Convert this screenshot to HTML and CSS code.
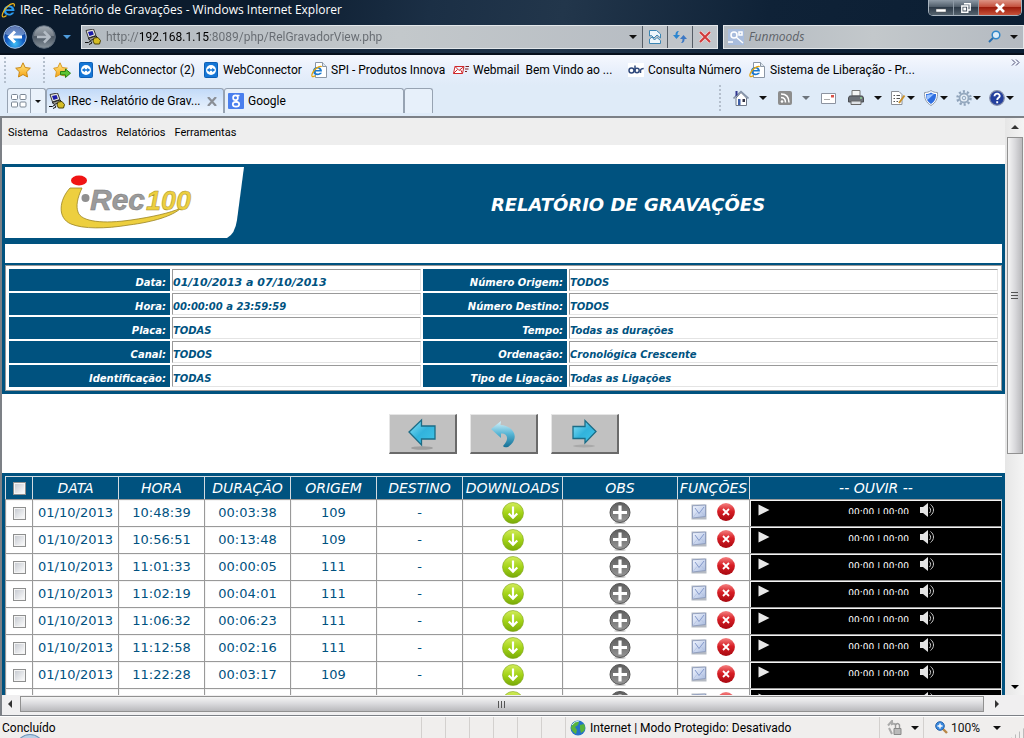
FILE: index.html
```html
<!DOCTYPE html>
<html lang="pt-BR">
<head>
<meta charset="utf-8">
<title>IRec - Relatório de Gravações</title>
<link rel="stylesheet" href="styles.css">
</head>
<body>
<svg class="defs" aria-hidden="true">
  <defs>
    <radialGradient id="gBlue" cx="50%" cy="80%" r="75%"><stop offset="0" stop-color="#3fc0f5"/><stop offset=".5" stop-color="#1560c4"/><stop offset="1" stop-color="#0a2f86"/></radialGradient>
    <linearGradient id="gGray" x2="0" y2="1"><stop offset="0" stop-color="#8d97a2"/><stop offset=".5" stop-color="#4d5864"/><stop offset="1" stop-color="#8a959e"/></linearGradient>
    <linearGradient id="gGreen" x2="0" y2="1"><stop offset="0" stop-color="#d2ec5a"/><stop offset=".5" stop-color="#a3d317"/><stop offset="1" stop-color="#78aa08"/></linearGradient>
    <linearGradient id="gPlus" x2="0" y2="1"><stop offset="0" stop-color="#5e5e5e"/><stop offset="1" stop-color="#959595"/></linearGradient>
    <linearGradient id="gRed" x2="0" y2="1"><stop offset="0" stop-color="#f48080"/><stop offset=".45" stop-color="#d81f26"/><stop offset="1" stop-color="#a80810"/></linearGradient>
    <linearGradient id="gMail" x2="1" y2="1"><stop offset="0" stop-color="#f2f6ff"/><stop offset="1" stop-color="#a9bbdf"/></linearGradient>
    <linearGradient id="gArrow" x2="1" y2="1"><stop offset="0" stop-color="#8fe4f8"/><stop offset=".5" stop-color="#32b3dc"/><stop offset="1" stop-color="#3fc4e6"/></linearGradient>
    <linearGradient id="gUndo" x2="0" y2="1"><stop offset="0" stop-color="#d8f3fb"/><stop offset=".5" stop-color="#55b4d4"/><stop offset="1" stop-color="#166f94"/></linearGradient>
    <linearGradient id="gStar" x2="0" y2="1"><stop offset="0" stop-color="#ffe98a"/><stop offset="1" stop-color="#f7a413"/></linearGradient>
    <symbol id="ie" viewBox="0 0 16 16"><path d="M13.500 9H5.200c.2 3.200 4.300 3.600 5.600 1.400h2.400C11.400 14.600 3 15 2.700 8.600 2.600 2.400 13.600 1.400 13.500 9zM5.300 7.200h5.300C10.400 4.600 5.700 4.500 5.300 7.200z" fill="#2b9cf0"/><path d="M13 4.500C14.800.3 10 1.200 6.500 4.500 2.500 8 .3 13.600 1.700 14.700c.9.800 2.600-.2 3.800-1.100" fill="none" stroke="#f1b719" stroke-width="1.200"/></symbol>
    <symbol id="iepage" viewBox="0 0 16 16"><path d="M4.500.5h7l4 4v11h-11z" fill="#fff" stroke="#8b96a5"/><path d="M11.500.5v4h4" fill="#dde5ee" stroke="#8b96a5"/><path d="M11 9.500H4.200c.4 2.500 3.500 2.600 4.600 1.200H11C9.400 14.300 2 14.300 2 9 2 3.800 11 3.500 11 9.500zM4.300 8h4.300C8.300 6 4.700 6 4.300 8z" fill="#1878d0"/><path d="M10.500 5C10 3.500 6 5.200 3.500 8 1.300 10.600 0 14 1.500 14.600c1 .4 2-.3 3-1" fill="none" stroke="#e5a50e" stroke-width="1.200"/></symbol>
    <symbol id="pcs" viewBox="0 0 16 16"><path d="M1 1.500 8.500 0 11 6.500 3.500 9z" fill="#e5e5dc" stroke="#3a3a3a"/><path d="M3 3l4.500-1 1.300 3.500L4.500 7z" fill="#1b1ba8"/><path d="M3 9.500 11 7l1.500 1.500-7 3z" fill="#9b9b92" stroke="#222"/><path d="M8 12l1-3 4-.5 2.500 3-1 3.500H9.500z" fill="#d5bd24" stroke="#4b4309"/><path d="M0 13.500h3.500l2-1.500 1.500 2-3 1.500" fill="none" stroke="#111"/></symbol>
    <symbol id="star" viewBox="0 0 16 16"><path d="M8 .8l2.200 4.700 5.100.7-3.700 3.600.9 5.200L8 12.500 3.500 15l.9-5.200L.7 6.200l5.100-.7z" fill="url(#gStar)" stroke="#c98713"/></symbol>
    <symbol id="staradd" viewBox="0 0 18 16"><path d="M7 .8l2.200 4.700 5.100.7-3.700 3.600.9 4.200L7 12.500 2.500 15l.9-5.200L.7 6.200l4.100-.7z" fill="url(#gStar)" stroke="#d99a24"/><path d="M7.500 9.500h5V7l5 4.200-5 4.300v-2.700h-5z" fill="#5cc533" stroke="#2c8211"/></symbol>
    <symbol id="tv" viewBox="0 0 14 16"><rect x=".5" y=".5" width="13" height="15" rx="1" fill="#1576d6" stroke="#0d5fb5"/><circle cx="7" cy="8" r="5" fill="#fff"/><path d="M2.800 8l3-2.300v1.500h2.400V5.700l3 2.300-3 2.300V8.800H5.800v1.500z" fill="#1576d6"/></symbol>
    <symbol id="down" viewBox="0 0 22 22"><circle cx="11" cy="11" r="10.500" fill="url(#gGreen)" stroke="#7fa51c" stroke-width=".6"/><path d="M11 4.500v11M6.700 11.500l4.300 4.300 4.300-4.300" fill="none" stroke="#fff" stroke-width="2.200"/></symbol>
    <symbol id="plus" viewBox="0 0 22 22"><ellipse cx="11" cy="21" rx="6" ry=".9" fill="#ccc"/><circle cx="11" cy="10.500" r="10" fill="url(#gPlus)" stroke="#555"/><path d="M11 3.500v14M4 10.500h14" stroke="#fff" stroke-width="3.200"/></symbol>
    <symbol id="mail" viewBox="0 0 16 16"><path d="M.5.5h15v15H.5z" fill="#b5bac3"/><path d="M1.500 1.800 14.500 1v11.500L1.500 14z" fill="url(#gMail)" stroke="#8795b8" stroke-width=".8"/><path d="M4 4l4 5.500L13 3" fill="none" stroke="#7990c5" stroke-width=".9"/><path d="M2 13.500l4-5M14 12l-4-4.500" fill="none" stroke="#b3c0de" stroke-width=".8"/></symbol>
    <symbol id="del" viewBox="0 0 18 18"><circle cx="9" cy="9" r="8.900" fill="url(#gRed)"/><path d="M6 6l6 6M12 6l-6 6" stroke="#fff" stroke-width="1.800"/></symbol>
    <symbol id="play" viewBox="0 0 12 12"><path d="M.5.500 11.500 6 .5 11.500z" fill="#e8e8e8"/></symbol>
    <symbol id="vol" viewBox="0 0 14 14"><path d="M0 4h3l5-4v14L3 10H0z" fill="#e4e4e4"/><path d="M9.500 4.500c1.500 1.500 1.500 4 0 5.500M10.500 1.500c4 3 4 8 0 11" fill="none" stroke="#c8c8c8"/></symbol>
    <symbol id="caret" viewBox="0 0 8 4"><path d="M0 0h8L4 4z" fill="currentColor"/></symbol>
  </defs>
</svg>

<header class="titlebar">
  <svg class="i16"><use href="#ie"/></svg>
  <span class="wtitle">IRec - Relatório de Gravações - Windows Internet Explorer</span>
  <div class="wbtns">
    <button class="wb" aria-label="Minimizar"><svg width="10" height="10" viewBox="0 0 10 10"><path d="M0 6h10v3H0z" fill="#fff" stroke="#555" stroke-width=".5"/></svg></button>
    <button class="wb" aria-label="Restaurar"><svg width="10" height="10" viewBox="0 0 10 10"><path d="M3 .8h6.200V7H7M.8 3h6v6.200h-6zM3 5.300h1.500v1.500H3z" fill="none" stroke="#fff" stroke-width="1.400"/></svg></button>
    <button class="wb close" aria-label="Fechar"><svg width="12" height="10" viewBox="0 0 12 10"><path d="M2 1l8 8M10 1 2 9" stroke="#fff" stroke-width="2.600"/></svg></button>
  </div>
</header>

<div class="navbar">
  <div class="backfwd">
    <button class="bare" aria-label="Voltar"><svg width="24" height="24" viewBox="0 0 24 24"><circle cx="12" cy="12" r="11.300" fill="url(#gBlue)" stroke="#a7c4e6"/><path d="M2 9C4-1 20-1 22 9 16 12 8 12 2 9z" fill="#fff" opacity=".35"/><path d="M19 12H7M12 6.500 6.500 12l5.500 5.500" fill="none" stroke="#fff" stroke-width="3"/></svg></button>
    <button class="bare" aria-label="Avançar"><svg width="24" height="24" viewBox="0 0 24 24"><circle cx="12" cy="12" r="11.300" fill="url(#gGray)" stroke="#5d6b7a"/><path d="M2 11C3-2 21-2 22 11z" fill="#fff" opacity=".2"/><path d="M5 12h12M12 6.500l5.500 5.500-5.500 5.500" fill="none" stroke="#b4bcc5" stroke-width="2.500"/></svg></button>
    <button class="bare lite" aria-label="Páginas recentes"><svg class="caret"><use href="#caret"/></svg></button>
  </div>
  <div class="address">
    <svg class="i16"><use href="#pcs"/></svg>
    <input class="url" type="text" aria-label="Endereço" value="http://192.168.1.15:8089/php/RelGravadorView.php">
    <button class="bare drop" aria-label="Mostrar endereços"><svg class="caret"><use href="#caret"/></svg></button>
    <button class="abtn" aria-label="Modo de compatibilidade"><svg width="14" height="16" viewBox="0 0 14 16"><path d="M1.500 7V1.500h7L12.500 5v4L9 6 6 9 3.500 6.500zM1.500 14.500V10L4 8l2.500 3L9 8.500l3.500 3v3z" fill="#eef6fb" stroke="#3c86b4"/></svg></button>
    <button class="abtn" aria-label="Atualizar"><svg width="16" height="16" viewBox="0 0 16 16"><path d="M7 2C4 2 3.500 4 3.500 6H1l3.500 4L8 6H5.500c0-2 .5-3 1.500-4z" fill="#2c86d0"/><path d="M9 14c3 0 3.500-2 3.500-4H15l-3.500-4L8 10h2.500c0 2-.5 3-1.500 4z" fill="#3d78c4"/></svg></button>
    <button class="abtn" aria-label="Parar"><svg width="12" height="12" viewBox="0 0 12 12"><path d="M1 1l10 10M11 1 1 11" stroke="#f3d9d9" stroke-width="3.400"/><path d="M1 1l10 10M11 1 1 11" stroke="#d13a3a" stroke-width="2"/></svg></button>
  </div>
  <div class="search">
    <svg width="16" height="16" viewBox="0 0 16 16"><path d="M0 0h16v16H0z" fill="#a9bddd"/><circle cx="6" cy="6" r="3" fill="none" stroke="#fff" stroke-width="1.500"/><path d="M8 8l7 6M11 3h3v3h-3zM0 13h5" stroke="#fff" stroke-width="1.500" fill="none"/></svg>
    <input class="q" type="text" aria-label="Pesquisar" placeholder="Funmoods">
    <button class="bare" aria-label="Pesquisar agora"><svg width="13" height="13" viewBox="0 0 13 13"><circle cx="8" cy="5" r="3.800" fill="#dcecf8" stroke="#2f86c8" stroke-width="1.500"/><path d="M5 8l-4 4" stroke="#2a6fae" stroke-width="2"/></svg></button>
    <button class="bare drop" aria-label="Opções de pesquisa"><svg class="caret"><use href="#caret"/></svg></button>
  </div>
</div>

<nav class="favbar" aria-label="Favoritos">
  <i class="grip"></i>
  <button class="bare fav" aria-label="Favoritos"><svg class="i16"><use href="#star"/></svg></button>
  <i class="grip"></i>
  <button class="bare favadd" aria-label="Adicionar a favoritos"><svg width="18" height="16"><use href="#staradd"/></svg></button>
  <a class="link l1" href="#"><svg width="14" height="16"><use href="#tv"/></svg>WebConnector (2)</a>
  <a class="link l2" href="#"><svg width="14" height="16"><use href="#tv"/></svg>WebConnector</a>
  <a class="link l3" href="#"><svg class="i16"><use href="#iepage"/></svg>SPI - Produtos Innova</a>
  <a class="link l4" href="#"><svg width="16" height="10" viewBox="0 0 16 10"><path d="M2 1.500h9l-1.500 7h-9zM2 1.500l4 4 5-4M.5 8.500l4-4M9.500 8.500 7.500 4.500" fill="#fff" stroke="#d0282c"/><path d="M12.500 1.500H16M12 4h3.500M12 6.500h2" stroke="#7b2020"/></svg>Webmail&nbsp; Bem Vindo ao ...</a>
  <a class="link l5" href="#"><svg width="16" height="14" viewBox="0 0 16 14"><path d="M0 0h16v14H0z" fill="#fff"/><g fill="none" stroke="#314a7c" stroke-width="1.500"><circle cx="3.500" cy="7.500" r="2.500"/><path d="M7 2.500v6"/><circle cx="9" cy="7.500" r="2.200"/><path d="M12.500 10V7.500q.2-2 3.200-2"/></g></svg>Consulta Número</a>
  <a class="link l6" href="#"><svg class="i16"><use href="#iepage"/></svg>Sistema de Liberação - Pr...</a>
  <button class="bare more" aria-label="Mais favoritos"><svg width="9" height="7" viewBox="0 0 9 7"><path d="M1 .5l3 3-3 3M5 .5l3 3-3 3" fill="none" stroke="#4b4b72"/></svg></button>
</nav>

<div class="tabbar">
  <div class="quick">
    <button class="bare qt" aria-label="Guias rápidas"><svg width="16" height="14" viewBox="0 0 16 14"><g fill="#fff" stroke="#7a8694"><rect x=".5" y=".5" width="6" height="5" rx="1"/><rect x="9" y=".5" width="6" height="5" rx="1"/><rect x=".5" y="8" width="6" height="5" rx="1"/><rect x="9" y="8" width="6" height="5" rx="1"/></g></svg></button>
    <button class="bare qd" aria-label="Lista de guias"><svg class="caret small"><use href="#caret"/></svg></button>
  </div>
  <div class="tab on"><svg class="i16"><use href="#pcs"/></svg><span class="tt">IRec - Relatório de Grav...</span><button class="bare" aria-label="Fechar guia"><svg width="10" height="9" viewBox="0 0 10 9"><path d="M1 0l8 9M9 0 1 9" stroke="#8a8f96" stroke-width="2.200"/></svg></button></div>
  <div class="tab off"><svg class="i16" viewBox="0 0 16 16"><rect width="16" height="16" rx="1" fill="#4a7fee"/><g fill="none" stroke="#fff" stroke-width="1.700"><circle cx="7.500" cy="4.800" r="2.400"/><ellipse cx="8" cy="11.300" rx="3.200" ry="2.400"/><path d="M9 2.500h2.500M8 7.200l1 1.800"/></g></svg><span class="tt">Google</span></div>
  <button class="tab newtab" aria-label="Nova guia"></button>
  <div class="cmds">
    <i class="grip"></i>
    <button class="bare c1" aria-label="Página inicial"><svg class="i16" viewBox="0 0 16 16"><path d="M3 8v7.500h10.500V8L8 2.500z" fill="#fff" stroke="#6f7888"/><path d="M.5 8.500 8 1.500l7.500 7" fill="none" stroke="#8492a8" stroke-width="1.600"/><path d="M2.500 1h2v4l-2 1.500z" fill="#31378f"/><path d="M5 9h2.500v6H5z" fill="#3d5fa8"/><path d="M9.500 9h2.500v3H9.500z" fill="#334"/></svg></button>
    <button class="bare d1" aria-label="Opções da página inicial"><svg class="caret"><use href="#caret"/></svg></button>
    <button class="bare c2" aria-label="Feeds"><svg width="14" height="14" viewBox="0 0 14 14"><rect width="14" height="14" rx="2" fill="#8d8d8d"/><circle cx="4" cy="10.500" r="1.300" fill="#fff"/><path d="M3 6.500q4.500 0 4.500 5M3 3q8 0 8 8.500" fill="none" stroke="#fff" stroke-width="1.500"/></svg></button>
    <button class="bare d2 dim" aria-label="Opções de feeds"><svg class="caret"><use href="#caret"/></svg></button>
    <button class="bare c3" aria-label="Ler email"><svg width="15" height="11" viewBox="0 0 15 11"><path d="M.5.5h14v10H.5z" fill="#fff" stroke="#8c93a0"/><path d="M10 2h3v2.500h-3z" fill="#d9534a"/><path d="M3 6.500h6" stroke="#aaa"/></svg></button>
    <button class="bare c4" aria-label="Imprimir"><svg class="i16" viewBox="0 0 16 16"><path d="M4 .5h8V6H4z" fill="#f5f5f5" stroke="#777"/><path d="M1.500 6h13l1 2v4H.5V8z" fill="#6d7178" stroke="#4a4d52"/><path d="M3 11h10v3.500H3z" fill="#dfe2e6" stroke="#666"/><path d="M12 8h2" stroke="#9f9"/></svg></button>
    <button class="bare d3" aria-label="Opções de impressão"><svg class="caret"><use href="#caret"/></svg></button>
    <button class="bare pair" aria-label="Página"><svg class="i16" viewBox="0 0 16 16"><path d="M1.500 1.500H9l3 3v10H1.500z" fill="#fff" stroke="#8b8f96"/><path d="M3.500 5.500H5M6.500 5.500H10M3.500 8.500H5M6.500 8.500H10M3.500 11.500H5M6.500 11.500H8" stroke="#555"/><path d="M14.500 5.500 9 13" stroke="#c9912c" stroke-width="2"/></svg><svg class="caret"><use href="#caret"/></svg></button>
    <button class="bare pair" aria-label="Segurança"><svg class="i16" viewBox="0 0 16 16"><path d="M8 .5c2 1.500 4 2 6.500 2 .3 6-1.500 10-6.500 13-5-3-6.800-7-6.500-13C4 2.500 6 2 8 .5z" fill="#fff" stroke="#909bab"/><path d="M8 2.500c1.500 1 3 1.500 5 1.500.2 4.500-1.300 7.500-5 10-3.700-2.500-5.200-5.500-5-10 2 0 3.500-.5 5-1.500z" fill="#2e6ee0"/><path d="M3.500 5q4-.5 7.500-1L4.500 10Q3.500 8 3.500 5z" fill="#9cc4ff"/></svg><svg class="caret"><use href="#caret"/></svg></button>
    <button class="bare pair" aria-label="Ferramentas do navegador"><svg class="i16" viewBox="0 0 16 16"><circle cx="8" cy="8" r="6.500" fill="none" stroke="#8fa3ba" stroke-width="2.500" stroke-dasharray="2.100 2"/><circle cx="8" cy="8" r="4.500" fill="#eaf1f8" stroke="#94a8be" stroke-width="1.800"/><circle cx="8" cy="8" r="1.800" fill="#dce9f7" stroke="#94a8be"/></svg><svg class="caret"><use href="#caret"/></svg></button>
    <button class="bare pair" aria-label="Ajuda"><svg class="i16" viewBox="0 0 16 16"><circle cx="8" cy="8" r="7.300" fill="#233f9d" stroke="#8790ab" stroke-width="1.200"/><path d="M5.500 6.200C5.500 2.500 11 3 10.700 6.200 10.500 8 8.200 7.800 8.200 10M8.200 11.300v1.900" fill="none" stroke="#fff" stroke-width="1.900"/></svg><svg class="caret"><use href="#caret"/></svg></button>
  </div>
</div>

<div class="frame">
  <main class="page">
    <nav class="menu" aria-label="Menu"><a href="#">Sistema</a><a href="#">Cadastros</a><a href="#">Relatórios</a><a href="#">Ferramentas</a></nav>
    <section class="report">
      <div class="banner">
        <svg class="logo" width="239" height="71" viewBox="0 0 239 71" role="img" aria-label="i-Rec100">
          <path d="M0 0h239l-7 53q-2 14-10 18H0z" fill="#fff"/>
          <ellipse cx="74" cy="13.500" rx="8" ry="5" fill="#f01414"/>
          <path d="M65 21h12C72 32 71 39 73 45c3 10 26 12 53 8 21-3 39-7 50-12-8 8-28 14-52 17-24 4-46 4-58-1C52 51 54 33 65 21z" fill="#edcf3f" stroke="#9a8425" stroke-width=".8"/>
          <circle cx="80.500" cy="31" r="4" fill="#8f8f8f"/>
          <text class="lt" x="85" y="43" fill="#9b9b9b" stroke="#777">Rec</text>
          <text class="lt num" x="141" y="43" fill="#edcf3f" stroke="#a8902c">100</text>
        </svg>
        <h1>RELATÓRIO DE GRAVAÇÕES</h1>
      </div>
      <div class="strip"></div>
      <table class="info">
        <colgroup><col class="k1"><col class="v1"><col class="k2"><col></colgroup>
        <tr><th scope="row">Data:</th><td class="period">01/10/2013 a 07/10/2013</td><th scope="row">Número Origem:</th><td>TODOS</td></tr>
        <tr><th scope="row">Hora:</th><td>00:00:00 a 23:59:59</td><th scope="row">Número Destino:</th><td>TODOS</td></tr>
        <tr><th scope="row">Placa:</th><td>TODAS</td><th scope="row">Tempo:</th><td>Todas as durações</td></tr>
        <tr><th scope="row">Canal:</th><td>TODOS</td><th scope="row">Ordenação:</th><td>Cronológica Crescente</td></tr>
        <tr><th scope="row">Identificação:</th><td>TODAS</td><th scope="row">Tipo de Ligação:</th><td>Todas as Ligações</td></tr>
      </table>
    </section>
    <div class="pager">
      <button aria-label="Anterior"><svg width="32" height="32" viewBox="0 0 32 32"><ellipse cx="16" cy="30" rx="11" ry="1.800" fill="#8e8e8e" opacity=".7"/><path d="M3 14 15.500 2v6H29v13H15.500v6z" fill="url(#gArrow)" stroke="#1b6c86" stroke-width="1.300"/></svg></button>
      <button aria-label="Voltar ao filtro"><svg width="32" height="32" viewBox="0 0 32 32"><path d="M4 11 14 3l-.5 4C28 8 33 21 21 29q-4 1-5-1c7-7 4-13-2-12.500L14 20z" fill="url(#gUndo)"/></svg></button>
      <button aria-label="Próxima"><svg width="32" height="32" viewBox="0 0 32 32"><ellipse cx="16" cy="28" rx="11" ry="1.500" fill="#999" opacity=".6"/><path d="M28 13.500 17 2.500v6H5v12h12V25z" fill="url(#gArrow)" stroke="#1b6c86" stroke-width="1.300"/></svg></button>
    </div>
    <table class="calls">
      <colgroup><col class="w26"><col class="w86"><col class="w86"><col class="w86"><col class="w86"><col class="w86"><col class="w100"><col class="w115"><col class="w72"><col></colgroup>
      <thead><tr><th><input type="checkbox" aria-label="Selecionar todas"></th><th>DATA</th><th>HORA</th><th>DURAÇÃO</th><th>ORIGEM</th><th>DESTINO</th><th>DOWNLOADS</th><th>OBS</th><th>FUNÇÕES</th><th>-- OUVIR --</th></tr></thead>
      <tbody id="rows"></tbody>
    </table>
  </main>
  <div class="vscroll" aria-hidden="true"><svg width="8" height="4"><path d="M0 4h8L4 0z" fill="#333"/></svg><div class="vthumb"><i></i></div><svg class="caret"><use href="#caret"/></svg></div>
  <div class="hscroll" aria-hidden="true"><svg width="4" height="8"><path d="M4 0v8L0 4z" fill="#333"/></svg><div class="hthumb"><i></i></div><svg width="4" height="8"><path d="M0 0v8l4-4z" fill="#333"/></svg></div>
</div>

<footer class="status">
  <span class="msg">Concluído</span>
  <i class="orb"></i>
  <div class="panes"><i></i><i></i><i></i><i></i><i></i><i></i></div>
  <div class="zone"><svg class="i16" viewBox="0 0 16 16"><circle cx="8" cy="8" r="7.500" fill="#2472c8"/><path d="M3 3q4-3 6-1L8 5 5 7l2 3-1 4Q1 11 1 7zM10 5l4-1q2 4 0 7l-3 2-1-4z" fill="#57b33c"/><path d="M2 5q3-4 7-4" stroke="#c9e9ff" fill="none"/></svg>Internet | Modo Protegido: Desativado</div>
  <button class="bare lock" aria-label="Filtragem"><svg class="i16" viewBox="0 0 16 16"><path d="M1 5.500 5 1v3q3-1 4 1M2 8l3 6" fill="none" stroke="#aaa" stroke-width="2"/><path d="M7 8.500h7v6H7z" fill="#b9b9b9" stroke="#888"/><path d="M8.500 8V5q2-3 4 0v3" fill="none" stroke="#999" stroke-width="1.400"/></svg><svg class="caret"><use href="#caret"/></svg></button>
  <button class="bare zoom"><svg width="13" height="13" viewBox="0 0 13 13"><path d="M8 8l4 4" stroke="#b88746" stroke-width="2.400"/><circle cx="5" cy="5" r="4.300" fill="#3b8ae0" stroke="#2561a8"/><path d="M5 2.500v5M2.500 5h5" stroke="#fff" stroke-width="1.400"/></svg><span>100%</span><svg class="caret"><use href="#caret"/></svg></button>
  <i class="size"></i>
</footer>
<script src="rows.js"></script>
</body>
</html>
```
FILE: rows.js
```js
const calls = [
  ["01/10/2013", "10:48:39", "00:03:38", "109"],
  ["01/10/2013", "10:56:51", "00:13:48", "109"],
  ["01/10/2013", "11:01:33", "00:00:05", "111"],
  ["01/10/2013", "11:02:19", "00:04:01", "111"],
  ["01/10/2013", "11:06:32", "00:06:23", "111"],
  ["01/10/2013", "11:12:58", "00:02:16", "111"],
  ["01/10/2013", "11:22:28", "00:03:17", "109"],
  ["", "", "", ""]
];

const icon = (id, size) => `<svg width="${size}" height="${size}"><use href="#${id}"/></svg>`;

document.getElementById("rows").innerHTML = calls.map((c, i) => `
<tr>
  <td><input type="checkbox" aria-label="Selecionar gravação ${i + 1}"></td>
  ${c.map(v => `<td>${v}</td>`).join("")}
  <td>${c[0] ? "-" : ""}</td>
  <td><button class="bare" aria-label="Baixar">${icon("down", 22)}</button></td>
  <td><button class="bare" aria-label="Observação">${icon("plus", 22)}</button></td>
  <td><div class="fn"><button class="bare" aria-label="Enviar">${icon("mail", 16)}</button><button class="bare" aria-label="Excluir">${icon("del", 18)}</button></div></td>
  <td class="player"><div class="pl"><button class="bare" aria-label="Ouvir">${icon("play", 12)}</button><span class="time">${c[0] ? "00:00 | 00:00" : ""}</span><button class="bare" aria-label="Volume">${icon("vol", 14)}</button></div></td>
</tr>`).join("");
```
FILE: styles.css
```css
* { box-sizing: border-box; }
body {
  margin: 0;
  height: 100vh;
  display: flex;
  flex-direction: column;
  overflow: hidden;
  background: #f0eeed;
  color: #000;
  font: 12px/16px Roboto, "Open Sans", sans-serif;
}
svg { display: block; flex: none; }
.defs { position: absolute; width: 0; height: 0; }
.i16 { width: 16px; height: 16px; }
.caret { width: 8px; height: 4px; }
.caret.small { width: 6px; height: 3px; }
.bare { display: inline-flex; align-items: center; padding: 0; border: 0; background: none; color: #111; font: inherit; }
a { color: inherit; text-decoration: none; }

/* window title */
.titlebar {
  flex: none; height: 22px; padding: 0 2px 0 1px;
  display: flex; align-items: flex-start; gap: 3px;
  background: linear-gradient(100deg, #0b1b2d 0 25%, #1b2f45 42%, #22364b 55%, #0f2237 75%, #0b1e33);
}
.titlebar > svg { margin-top: 2px; }
.wtitle { flex: 1; line-height: 20px; color: #fff; font-family: "Open Sans", sans-serif; }
.wbtns { display: flex; height: 16px; border: 1px solid #a9b4bf; border-top: 0; border-radius: 0 0 5px 5px; overflow: hidden; }
.wb { width: 25px; padding: 0; border: 0; border-right: 1px solid #8e9aa6; display: grid; place-items: center; background: linear-gradient(#8e9aa6, #4a5764 50%, #2d3a48 50%, #56646f); }
.wb.close { width: 42px; border-right: 0; background: linear-gradient(#dd9384, #c24a36 50%, #9c1c0c 50%, #c8523a); }

/* address row */
.navbar {
  flex: none; height: 33px; padding: 0 0 2px 3px;
  display: flex; align-items: center;
  border-bottom: 2px solid #07101c;
  background: linear-gradient(100deg, #0b1b2d 0 25%, #1b2f45 42%, #22364b 55%, #0f2237 75%, #0b1e33);
}
.backfwd { width: 78px; display: flex; align-items: center; gap: 5px; }
.lite { color: #4f9bdb; margin-left: 2px; }
.address, .search { height: 24px; display: flex; align-items: center; border: 1px solid #e3e7ea; background: linear-gradient(90deg, #b3bac1, #c3c8cb 50%, #b4bac1); }
.address { flex: 640; padding-left: 3px; }
.search { flex: 299; margin-left: 5px; padding-left: 4px; }
.url, .q { flex: 1; min-width: 0; border: 0; padding: 0 5px; background: none; font: inherit; outline: none; }
/* the host name stands out from the rest of the address */
.url { background: linear-gradient(90deg, #666b71 39px, #000 39px 108px, #666b71 108px); -webkit-background-clip: text; background-clip: text; color: transparent; caret-color: #000; }
.q { font-family: "Open Sans", sans-serif; }
.q::placeholder { color: #5d6268; font-style: italic; opacity: 1; }
.drop { padding: 0 5px 0 9px; }
.abtn { width: 25px; height: 22px; padding: 0; border: 0; border-left: 1px solid #555d66; background: #c0c5ca; display: grid; place-items: center; }

/* favourites */
.favbar { flex: none; height: 30px; padding: 0 4px; display: flex; align-items: center; background: linear-gradient(#f5f8fe, #e6eefb 60%, #dfebf8); }
.grip { flex: none; width: 2px; height: 26px; background: repeating-linear-gradient(#b4bfcd 0 2px, transparent 2px 4px); }
.fav { margin: 0 12px 0 9px; }
.favadd { margin: 0 8px; }
.link { display: flex; align-items: center; gap: 5px; white-space: nowrap; }
.l1 { width: 125px; }
.l2 { width: 107px; }
.l3 { width: 142px; gap: 4px; }
.l4 { width: 175px; gap: 4px; }
.l5 { width: 121px; gap: 4px; }
.more { margin-left: auto; align-self: flex-start; margin-top: 4px; }

/* tabs */
.tabbar { flex: none; height: 31px; padding: 3px 2px 3px 7px; display: flex; background: #dfebf8; }
.quick { display: flex; border: 1px solid #97a3b2; border-bottom: 0; border-radius: 3px 3px 0 0; background: #eaf2fb; }
.qt { padding: 0 3px; border-right: 1px solid #97a3b2; }
.qd { padding: 0 4px; }
.tab { display: flex; align-items: center; border: 1px solid #97a3b2; border-bottom: 0; border-radius: 3px 3px 0 0; background: #e7f0fa; }
.tt { flex: 1; white-space: nowrap; }
.on { width: 178px; padding: 0 6px 0 2px; gap: 3px; background: linear-gradient(#c2daf8, #eef5fd); }
.off { width: 180px; padding: 0 3px; gap: 4px; }
.newtab { width: 29px; }
.cmds { margin-left: auto; display: flex; align-items: center; padding-bottom: 5px; }
.cmds .grip { margin-right: 12px; }
.c1, .c2 { margin-right: 10px; }
.d1, .d2 { margin-right: 11px; }
.dim { color: #6d747c; }
.c3 { margin-right: 12px; }
.c4 { margin-right: 10px; }
.d3 { margin-right: 8px; }
.pair { width: 33px; gap: 1px; }

/* document area */
.frame {
  flex: 1; min-height: 0;
  display: grid; grid-template: minmax(0, 1fr) 20px / minmax(0, 1fr) 19px;
  border: solid #7c8086; border-width: 2px 0 1px 2px;
  background: #f0eff0;
}
.page { overflow: hidden; background: #fff; font-family: "DejaVu Sans", sans-serif; }
.menu { height: 27px; padding: 7px 6px 0; margin-bottom: 19px; display: flex; gap: 9px; background: #eee; font: 11px/16px Roboto, sans-serif; }
.report { border: 3px solid #00527f; color: #00527f; }
.banner { display: flex; align-items: flex-start; height: 77px; background: #00527f; }
.banner h1 { flex: 1; margin: 0; padding-left: 10px; text-align: center; color: #fff; font: italic bold 18px/76px "DejaVu Sans", sans-serif; }
.lt { font: italic bold 30px "Liberation Sans", sans-serif; stroke-width: .5px; }
.num { font-size: 27px; }
.strip { height: 21px; border-bottom: 2px solid #00527f; background: #fff; }
.info { width: 100%; padding: 1px; table-layout: fixed; border: 1px solid #999; border-spacing: 2px; background: #fff; font: italic bold 10px/16px "DejaVu Sans", sans-serif; }
.k1 { width: 161px; }
.v1 { width: 249px; }
.k2 { width: 144px; }
.info th, .info td { height: 22px; padding: 5px 4px 0 0; border: 1px solid #e4e4e4; border-top-color: #999; border-left-color: #999; line-height: 15px; white-space: nowrap; }
.info th { border: 0; text-align: right; background: #00527f; color: #fff; }
.info .period { font-size: 11px; }
.pager { padding: 20px 0 19px; display: flex; justify-content: center; gap: 13px; }
.pager button { width: 68px; height: 40px; padding: 0; display: grid; place-items: center; border: 1px solid; border-color: #e6e6e6 #6a6a6a #6a6a6a #e6e6e6; border-width: 1px 2px 2px 1px; background: #c1c1c1; }

/* recordings */
.calls { width: 100%; table-layout: fixed; border: 3px solid #00527f; border-spacing: 0; color: #00527f; font: 13px/16px "DejaVu Sans", sans-serif; }
.w26 { width: 27px; }
.w86 { width: 86px; }
.w100 { width: 100px; }
.w115 { width: 115px; }
.w72 { width: 72px; }
.calls th, .calls td { padding: 0; border: solid #999; border-width: 1px 0 0 1px; text-align: center; vertical-align: middle; white-space: nowrap; }
.calls th { height: 23px; border-color: #d3dbe1; background: #00527f; color: #fff; font-size: 14px; font-weight: normal; font-style: italic; }
.calls td { height: 27px; box-shadow: inset 1px 1px #f4f4f4; }
.calls button { vertical-align: middle; }
.calls input { appearance: none; display: block; margin: 0 auto; width: 13px; height: 13px; border: 1px solid #8e8f8f; outline: 1px solid #f4f4f4; outline-offset: -2px; background: linear-gradient(135deg, #c3c7ce, #fff); }
.fn { display: flex; justify-content: center; gap: 10px; padding: 0 2px 2px 0; }
.calls .player { background: #000; border-right: 1px solid #ddd; vertical-align: top; }
.pl { display: flex; align-items: center; padding: 4px 67px 0 8px; height: 16px; }
.time { flex: 1; height: 7px; margin-right: 11px; overflow: hidden; text-align: right; color: #fff; font: 9px/10px "DejaVu Sans", sans-serif; }

/* scroll bars */
.vscroll { display: flex; flex-direction: column; align-items: center; padding: 7px 1px 6px 1px; background: linear-gradient(90deg, #e6e6e6, #f4f4f4); }
.vthumb { width: 16px; height: 317px; margin: 8px 0 auto; display: grid; place-items: center; border: 1px solid #919191; background: linear-gradient(90deg, #f5f5f5, #d9d9dc 50%, #b9b9bc); }
.vthumb i { width: 7px; height: 8px; background: repeating-linear-gradient(#555 0 1px, transparent 1px 3px); }
.hscroll { grid-column: 1 / -1; display: flex; align-items: flex-start; padding: 1px 25px 0 6px; }
.hscroll svg { margin-top: 4px; }
.hthumb { flex: 1; height: 16px; margin: 0 11px 0 8px; display: grid; place-items: center; border: 1px solid #919191; background: linear-gradient(#f5f5f5, #d9d9dc 50%, #b9b9bc); }
.hthumb i { width: 8px; height: 7px; background: repeating-linear-gradient(90deg, #555 0 1px, transparent 1px 3px); }

/* status bar */
.status { position: relative; flex: none; height: 22px; padding-left: 2px; display: flex; align-items: center; border-top: 1px solid #fff; background: #f0eeed; }
.msg { flex: 1; }
.orb { position: absolute; left: 16px; bottom: -22px; width: 28px; height: 26px; border: 1px solid #6d92b8; border-radius: 50%; background: #b8d0e6; }
.panes { display: flex; align-self: stretch; }
.panes i { width: 24px; border-left: 1px solid #d3d0ce; }
.zone, .lock, .zoom { align-self: stretch; display: flex; align-items: center; border-left: 1px solid #d3d0ce; }
.zone { width: 314px; padding-left: 4px; gap: 4px; }
.lock { width: 44px; padding-left: 7px; gap: 8px; }
.zoom { width: 88px; padding-left: 11px; gap: 3px; }
.zoom .caret { margin-left: auto; margin-right: 10px; }
.size { width: 13px; height: 10px; align-self: flex-end; background: repeating-linear-gradient(90deg, #bbb 0 1px, transparent 1px 4px); clip-path: polygon(100% 0, 100% 100%, 0 100%); }
```
